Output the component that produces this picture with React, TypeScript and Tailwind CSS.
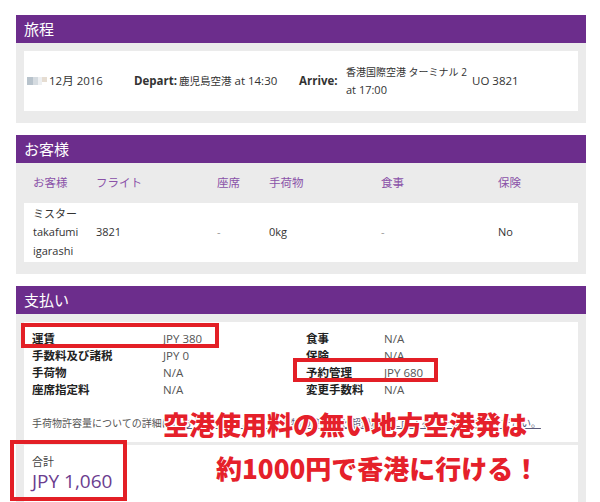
import React from "react";

const font = "font-['Open_Sans','Noto_Sans_CJK_JP',sans-serif]";

const SectionHeader = ({ title }: { title: string }) => (
  <div className="h-[28px] bg-[#6c2d8c] pl-[8px] flex items-center text-white text-[15px]">
    {title}
  </div>
);

const Itinerary = () => (
  <section className="bg-[#ebebeb] pb-[12px]">
    <SectionHeader title="旅程" />
    <div className="mx-[8px] mt-[8px] h-[60px] bg-white flex items-center text-[11.5px] text-[#333]">
      <div className="w-[110px] pl-[3px] flex items-center">
        <div className="flex items-center mr-[2px]">
          <span className="w-[6px] h-[8px] bg-[#b8c3cc]" />
          <span className="w-[5px] h-[8px] bg-[#d5dbe0]" />
          <span className="w-[4px] h-[8px] bg-[#eef0f2]" />
          <span className="w-[5px] h-[5px] mb-[3px] bg-[#e6ddd2]" />
        </div>
        <span>12月 2016</span>
      </div>
      <div className="w-[165px] flex items-center">
        <span className="font-bold w-[45px]">Depart:</span>
        <span>
          <span className="text-[10.5px]">鹿児島空港</span> at 14:30
        </span>
      </div>
      <div className="w-[47px] font-bold">Arrive:</div>
      <div className="w-[126px] leading-[17px] text-[11px]">
        <div className="whitespace-nowrap text-[10px]">香港国際空港 ターミナル 2</div>
        <div>at 17:00</div>
      </div>
      <div>UO 3821</div>
    </div>
  </section>
);

const paxCols = "grid grid-cols-[63px_121px_52px_112px_117px_1fr] px-[9px]";

const Passengers = () => (
  <section className="bg-[#ebebeb] pb-[12px]">
    <SectionHeader title="お客様" />
    <div className={`${paxCols} mx-[8px] h-[40px] items-center text-[11.5px] text-[#8a52a8]`}>
      <div>お客様</div>
      <div>フライト</div>
      <div>座席</div>
      <div>手荷物</div>
      <div>食事</div>
      <div>保険</div>
    </div>
    <div className={`${paxCols} mx-[8px] h-[59px] bg-white items-center text-[11px] text-[#333]`}>
      <div className="leading-[18.5px]">
        ミスター
        <br />
        takafumi
        <br />
        igarashi
      </div>
      <div>3821</div>
      <div className="text-[#999]">-</div>
      <div>0kg</div>
      <div className="text-[#999]">-</div>
      <div>No</div>
    </div>
  </section>
);

const fees: [string, string, string, string][] = [
  ["運賃", "JPY 380", "食事", "N/A"],
  ["手数料及び諸税", "JPY 0", "保険", "N/A"],
  ["手荷物", "N/A", "予約管理", "JPY 680"],
  ["座席指定料", "N/A", "変更手数料", "N/A"],
];

const Payment = () => (
  <section className="bg-[#ebebeb] pb-[12px]">
    <SectionHeader title="支払い" />
    <div className="mx-[8px] mt-[8px] bg-white pt-[8px] pb-[10px] px-[8px]">
      <div className="grid grid-cols-[131px_143px_78px_1fr] text-[11.5px] leading-[17px]">
        {fees.map((r) => (
          <React.Fragment key={r[0]}>
            <div className="font-bold text-[#222]">{r[0]}</div>
            <div className="text-[#555]">{r[1]}</div>
            <div className="font-bold text-[#222]">{r[2]}</div>
            <div className="text-[#555]">{r[3]}</div>
          </React.Fragment>
        ))}
      </div>
      <p className="mt-[17px] text-[10px] leading-[17px] text-[#555] whitespace-nowrap">
        手荷物許容量についての詳細は
        <span className="underline text-[#5a5a7a]">
          こちらのリンクより、手荷物の許容量と超過料金に関するページをご覧ください。
        </span>
      </p>
    </div>
    <div className="mx-[8px] mt-[3px] h-[70px] bg-white pt-[9px] px-[8px]">
      <div className="text-[11px] text-[#444] leading-[16px]">合計</div>
      <div className="text-[19px] text-[#6b3d8f] leading-[22px]">JPY 1,060</div>
    </div>
  </section>
);

const stroke =
  "[text-shadow:1px_1px_0_#fff,-1px_-1px_0_#fff,1px_-1px_0_#fff,-1px_1px_0_#fff,0_1px_0_#fff,0_-1px_0_#fff,1px_0_0_#fff,-1px_0_0_#fff]";

export default function App() {
  return (
    <div className={`relative w-[600px] h-[502px] overflow-hidden bg-white ${font}`}>
      <div className="ml-[16px] w-[570px] pt-[15px] flex flex-col gap-[12px]">
        <Itinerary />
        <Passengers />
        <Payment />
      </div>

      {/* annotation overlay */}
      <div className="absolute left-[21px] top-[323px] w-[198px] h-[25px] border-[4px] border-[#e31f26]" />
      <div className="absolute left-[293px] top-[358px] w-[145px] h-[24px] border-[4px] border-[#e31f26]" />
      <div className="absolute left-[10px] top-[440px] w-[117px] h-[61px] border-[4px] border-[#e31f26]" />
      <div
        className={`absolute left-[163px] top-[407px] text-[26px] leading-[34px] font-black text-[#e5202a] whitespace-nowrap font-['Noto_Sans_CJK_JP',sans-serif] ${stroke}`}
      >
        空港使用料の無い地方空港発は
      </div>
      <div
        className={`absolute left-[216px] top-[451px] text-[26px] leading-[34px] font-black text-[#e5202a] whitespace-nowrap font-['Noto_Sans_CJK_JP',sans-serif] ${stroke}`}
      >
        約1000円で香港に行ける！
      </div>
    </div>
  );
}
